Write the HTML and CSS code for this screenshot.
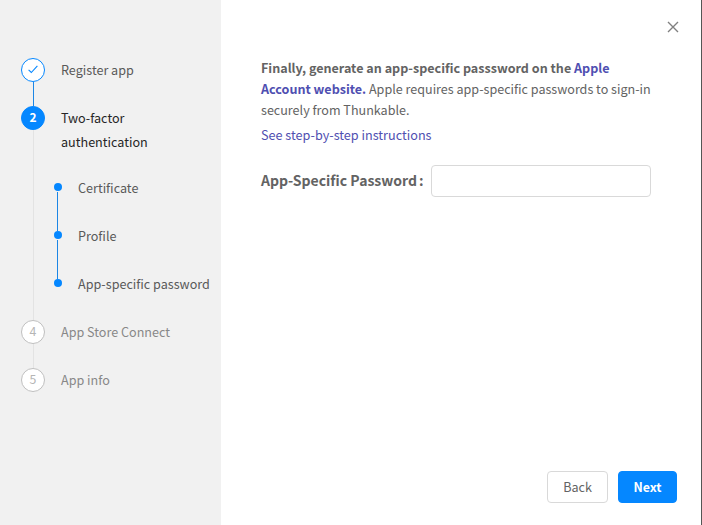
FILE: index.html
```
<!DOCTYPE html>
<html lang="en">
<head>
<meta charset="utf-8">
<title>Two-factor authentication</title>
<link rel="stylesheet" href="styles.css">
</head>
<body>
<div class="dialog">
  <aside class="sidebar">
    <ol class="steps">
      <li class="step done">
        <div class="rail"><span class="badge"><svg width="12" height="12" viewBox="0 0 12 12"><path d="M1.6 5.9 4.3 8.5 10.4 1.9" fill="none" stroke="#0587ff" stroke-width="1.1"/></svg></span></div>
        <div class="label">Register app</div>
      </li>
      <li class="step current">
        <div class="rail"><span class="badge">2</span></div>
        <div class="body">
          <div class="label">Two-factor<br>authentication</div>
          <ul class="substeps">
            <li class="substep"><span class="dot"></span><span class="label">Certificate</span></li>
            <li class="substep"><span class="dot"></span><span class="label">Profile</span></li>
            <li class="substep"><span class="dot"></span><span class="label">App-specific password</span></li>
          </ul>
        </div>
      </li>
      <li class="step waiting">
        <div class="rail"><span class="badge">4</span></div>
        <div class="label">App Store Connect</div>
      </li>
      <li class="step waiting">
        <div class="rail"><span class="badge">5</span></div>
        <div class="label">App info</div>
      </li>
    </ol>
  </aside>
  <main class="content">
    <button class="close" aria-label="Close"><svg width="12" height="12" viewBox="0 0 12 12"><path d="M1 1 11 11M11 1 1 11" fill="none" stroke="#808080" stroke-width="1.4"/></svg></button>
    <p class="intro"><b>Finally, generate an app-specific passsword on the <a>Apple<br>Account website.</a></b> <span>Apple requires app-specific passwords to sign-in</span><br><span>securely from Thunkable.</span></p>
    <a class="help">See step-by-step instructions</a>
    <div class="field">
      <label for="pw">App-Specific Password<span class="colon">:</span></label>
      <input id="pw" type="text">
    </div>
    <footer class="actions">
      <button class="btn">Back</button>
      <button class="btn primary">Next</button>
    </footer>
  </main>
</div>
</body>
</html>
```
FILE: styles.css
```
* { box-sizing: border-box; }
body {
  margin: 0;
  font-family: "Noto Sans CJK SC", sans-serif;
  font-size: 12.6px;
  color: #636363;
  background: #fff;
}
ol, ul { list-style: none; margin: 0; padding: 0; }
button, input { font: inherit; color: inherit; }
.dialog { display: flex; width: 702px; height: 525px; }
.sidebar { width: 221px; flex: none; background: #f1f1f1; padding: 58px 0 0 21px; }
.step { display: flex; gap: 16px; min-height: 48px; line-height: 24px; }
.rail { width: 24px; flex: none; display: flex; flex-direction: column; align-items: center; }
.rail::after { content: ""; width: 1px; flex: 1; background: #e3e3e3; }
.step:last-child .rail::after { display: none; }
.done .rail::after { background: #1c86e5; }
.badge {
  width: 24px; height: 24px; border-radius: 50%;
  display: flex; align-items: center; justify-content: center;
  background: #fff; border: 1px solid #bfbfbf; color: #b5b5b5;
  line-height: 20px; padding-bottom: 2px; font-size: 12.3px;
}
.done .badge { border-color: #0587ff; padding-bottom: 0; }
.current .badge { background: #0587ff; border-color: #0587ff; color: #fff; font-weight: 700; font-size: 12px; }
.label { color: #595959; white-space: nowrap; }
.current .body > .label { color: #262626; }
.waiting .label { color: #888; }
.substeps { padding-top: 22px; margin-left: -7px; }
.substep { display: flex; gap: 16px; height: 48px; position: relative; }
.dot { width: 8px; height: 8px; border-radius: 50%; background: #0587ff; margin-top: 7px; flex: none; }
.substep:not(:last-child)::after {
  content: ""; position: absolute; left: 3px; top: 16px; width: 1px; height: 39px; background: #1c86e5;
}
.content { flex: 1; display: flex; flex-direction: column; padding: 21px 24px 22px 40px; border-right: 1px solid #555; }
.close { align-self: flex-end; width: 12px; height: 12px; margin-right: -2px; padding: 0; border: 0; background: none; display: flex; }
.intro { margin: 24px 0 0; line-height: 21px; white-space: nowrap; font-size: 12.57px; }
.intro a, .help { color: #4f4fb1; }
.help { line-height: 24px; margin-top: 3px; font-size: 12.65px; }
.field { display: flex; align-items: center; margin-top: 18px; }
.field label { width: 170px; font-size: 14px; font-weight: 700; line-height: 20px; padding-bottom: 2px; white-space: nowrap; }
.colon { margin-left: 2px; }
.field input { width: 220px; height: 32px; border: 1px solid #d9d9d9; border-radius: 4px; padding: 0 11px; background: #fff; }
.actions { margin-top: auto; display: flex; justify-content: flex-end; gap: 10px; }
.btn { height: 32px; width: 61px; padding: 0 0 2px; border: 1px solid #d9d9d9; border-radius: 4px; background: #fff; }
.primary { width: 59px; padding-bottom: 0; background: #0587ff; border-color: #0587ff; color: #fff; font-weight: 700; font-size: 12.4px; }
```
